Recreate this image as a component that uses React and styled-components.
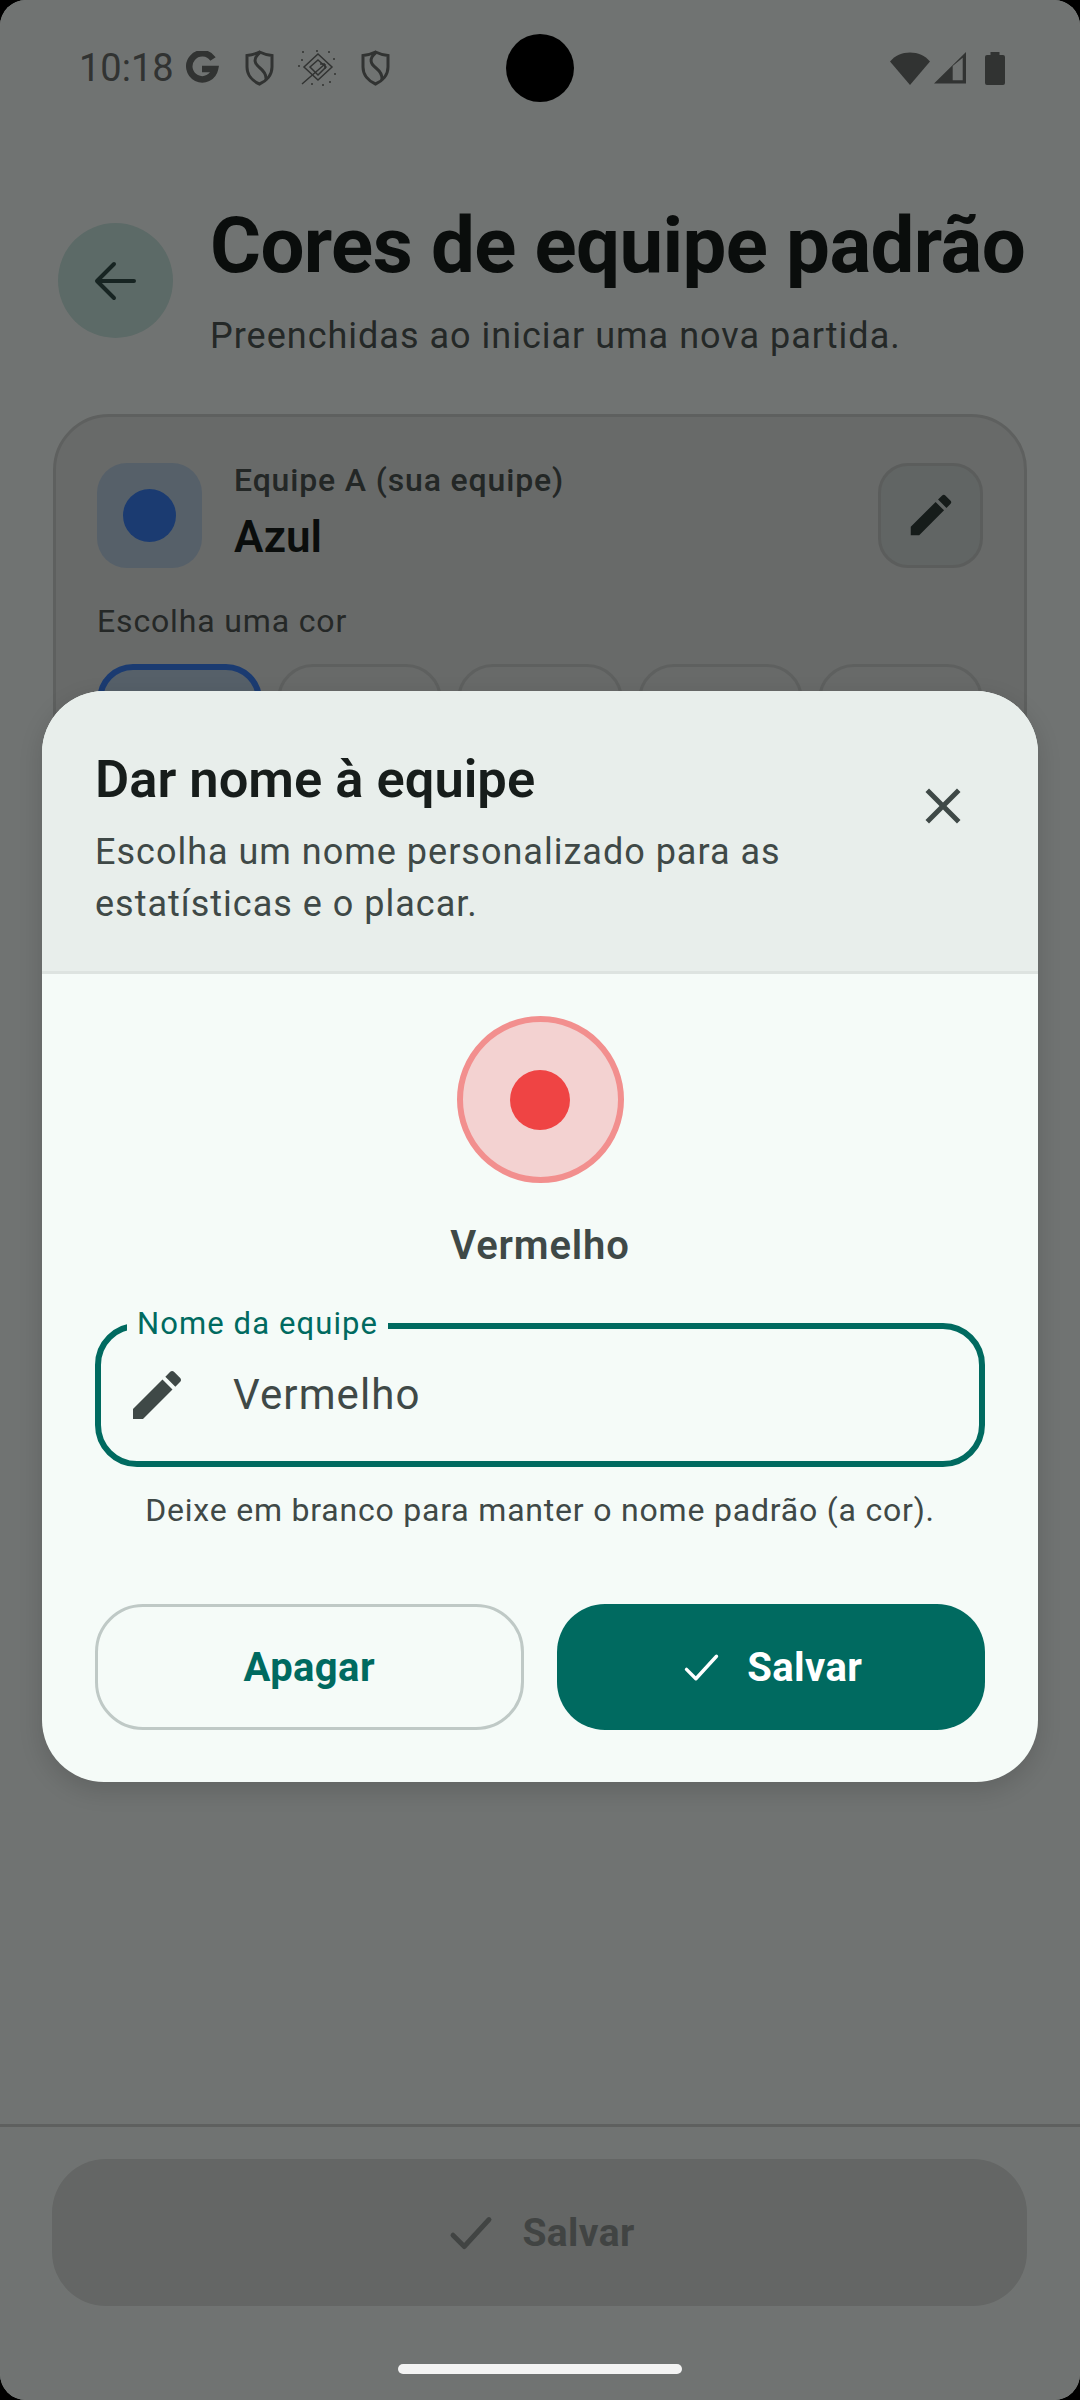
import React from 'react'
import styled, { createGlobalStyle } from 'styled-components'

const EDIT = 'M3 17.25V21h3.75L17.81 9.94l-3.75-3.75L3 17.25zM20.71 7.04c.39-.39.39-1.02 0-1.41l-2.34-2.34c-.39-.39-1.02-.39-1.41 0l-1.83 1.83 3.75 3.75 1.83-1.83z'
const CLOSE = 'M19 6.41 17.59 5 12 10.59 6.41 5 5 6.41 10.59 12 5 17.59 6.41 19 12 13.41 17.59 19 19 17.59 13.41 12z'
const TEAL = '#006a60'
const SURFACE = '#f5fbf8'

const Global = createGlobalStyle`
  html, body { margin: 0; padding: 0; background: #000; }
  * { box-sizing: border-box; }
  body { font-family: Roboto, "Noto Sans", sans-serif; }
`

const Screen = styled.div`
  position: relative;
  width: 1080px;
  height: 2400px;
  overflow: hidden;
  border-radius: 26px;
  background: ${SURFACE};
  display: flex;
  flex-direction: column;
`

const StatusBar = styled.div`
  height: 136px;
  flex-shrink: 0;
  padding: 0 75px;
  display: grid;
  grid-template-columns: 1fr 68px 1fr;
  align-items: center;
  color: #6b6f6d;
`
const StatusLeft = styled.div`
  display: flex;
  align-items: center;
`
const StatusRight = styled.div`
  display: flex;
  align-items: center;
  justify-content: flex-end;
  gap: 4px;
`
const Time = styled.span`
  font-size: 38px;
  line-height: 38px;
  margin: 0 12px 0 4px;
`
const NotifIcons = styled.div`
  display: flex;
  align-items: center;
  gap: 24px;
`
const Camera = styled.div`
  width: 68px;
  height: 68px;
  border-radius: 50%;
  background: #000;
  position: relative;
  z-index: 5;
`
const BatteryIcon = styled.svg`
  margin-left: 15px;
`

const Header = styled.div`
  display: flex;
  align-items: flex-start;
  padding: 66px 40px 0 58px;
  gap: 37px;
`
const BackButton = styled.div`
  width: 115px;
  height: 115px;
  margin-top: 21px;
  flex-shrink: 0;
  border-radius: 50%;
  background: #c8e6e0;
  color: #33504b;
  display: flex;
  align-items: center;
  justify-content: center;
`
const HeaderText = styled.div`
  min-width: 0;
`
const Title = styled.h1`
  margin: 0;
  font-size: 78px;
  line-height: 88px;
  font-weight: 700;
  letter-spacing: -0.6px;
  white-space: nowrap;
  color: #171d1b;
`
const Subtitle = styled.p`
  margin: 22px 0 0;
  font-size: 36px;
  line-height: 48px;
  letter-spacing: 1px;
  color: #4f5755;
`

const Card = styled.section`
  margin: 54px 53px 0;
  height: 1100px;
  flex-shrink: 0;
  padding: 43px 41px;
  border-radius: 56px;
  border: 3px solid #cdd1cf;
  background: #e2e6e4;
`
const TeamRow = styled.div`
  display: flex;
  align-items: center;
  gap: 32px;
`
const SwatchBox = styled.div`
  width: 105px;
  height: 105px;
  border-radius: 30px;
  background: #bbd1e5;
  display: flex;
  align-items: center;
  justify-content: center;
  flex-shrink: 0;
`
const Dot = styled.div`
  width: ${p => p.$size}px;
  height: ${p => p.$size}px;
  border-radius: 50%;
  background: ${p => p.$color};
`
const TeamText = styled.div`
  flex: 1;
  padding-bottom: 8px;
`
const TeamLabel = styled.div`
  font-size: 32px;
  line-height: 40px;
  font-weight: 500;
  letter-spacing: 0.85px;
  color: #4d5553;
`
const TeamName = styled.div`
  margin-top: 12px;
  font-size: 44px;
  line-height: 50px;
  font-weight: 600;
  color: #171d1b;
`
const EditButton = styled.div`
  width: 105px;
  height: 105px;
  border-radius: 30px;
  border: 3px solid #c6cac8;
  background: #d3dcd9;
  color: #303d3a;
  display: flex;
  align-items: center;
  justify-content: center;
  flex-shrink: 0;
`
const PickLabel = styled.div`
  margin-top: 31px;
  font-size: 32px;
  line-height: 40px;
  letter-spacing: 0.85px;
  color: #515856;
`
const ColorGrid = styled.div`
  margin-top: 23px;
  display: grid;
  grid-template-columns: repeat(5, 1fr);
  gap: 15px;
`
const ColorTile = styled.div`
  height: 165px;
  border-radius: 36px;
  border: ${p => (p.$selected ? '6px solid #3b82f6' : '3px solid #cdd1cf')};
  background: ${p => (p.$selected ? '#bbd1e5' : 'transparent')};
`

const BottomBar = styled.div`
  margin-top: auto;
  height: 276px;
  flex-shrink: 0;
  padding: 32px 53px 0 52px;
  border-top: 3px solid #ced2d0;
`
const DisabledSave = styled.div`
  height: 147px;
  border-radius: 54px;
  background: #d9dedc;
  color: #8f9492;
  display: flex;
  align-items: center;
  justify-content: center;
  gap: 24px;
  font-size: 39px;
  font-weight: 700;
  letter-spacing: 0.4px;
`

const Scrim = styled.div`
  position: absolute;
  inset: 0;
  padding: 691px 42px 0;
  background: rgba(0, 0, 0, 0.54);
`
const HomeBar = styled.div`
  position: absolute;
  left: 398px;
  bottom: 26px;
  width: 284px;
  height: 10px;
  border-radius: 5px;
  background: #f3f3f3;
`

const Dialog = styled.div`
  height: 1091px;
  border-radius: 62px;
  overflow: hidden;
  background: ${SURFACE};
  box-shadow: 0 8px 24px rgba(0, 0, 0, 0.14);
  display: flex;
  flex-direction: column;
`
const DialogHead = styled.div`
  height: 283px;
  flex-shrink: 0;
  padding: 56px 53px 0;
  background: #e8eeeb;
  border-bottom: 3px solid #dde3e0;
  display: flex;
  justify-content: space-between;
`
const DialogHeadText = styled.div`
  width: 720px;
`
const DialogTitle = styled.h2`
  margin: 0;
  font-size: 52.5px;
  line-height: 64px;
  font-weight: 600;
  color: #171d1b;
`
const DialogDesc = styled.p`
  margin: 15px 0 0;
  font-size: 36px;
  line-height: 52px;
  letter-spacing: 1px;
  color: #3f4947;
`
const CloseIcon = styled.svg`
  margin: 29px 12px 0 0;
  color: #3f4947;
`
const DialogBody = styled.div`
  flex: 1;
  padding: 42px 53px 52px;
  display: flex;
  flex-direction: column;
  align-items: stretch;
`
const Preview = styled.div`
  align-self: center;
  width: 167px;
  height: 167px;
  border-radius: 50%;
  background: #f3d2d1;
  border: 6px solid #f28f8e;
  display: flex;
  align-items: center;
  justify-content: center;
`
const PreviewName = styled.div`
  margin-top: 40px;
  text-align: center;
  font-size: 40px;
  line-height: 46px;
  font-weight: 600;
  letter-spacing: 0.85px;
  color: #3f4947;
`
const Field = styled.div`
  position: relative;
  margin-top: 54px;
  height: 144px;
  border: 6px solid ${TEAL};
  border-radius: 42px;
  padding: 0 0 0 24px;
  display: flex;
  align-items: center;
  gap: 44px;
`
const FieldLabel = styled.span`
  position: absolute;
  left: 26px;
  top: -28px;
  padding: 0 10px;
  background: ${SURFACE};
  color: ${TEAL};
  font-size: 31px;
  line-height: 46px;
  letter-spacing: 1.1px;
`
const FieldValue = styled.span`
  font-size: 42px;
  line-height: 56px;
  letter-spacing: 1.1px;
  color: #3f4947;
`
const FieldIcon = styled.div`
  color: #3f4947;
  flex-shrink: 0;
  display: flex;
`
const Helper = styled.div`
  margin-top: 21px;
  text-align: center;
  font-size: 32px;
  line-height: 44px;
  letter-spacing: 0.8px;
  color: #3f4947;
`
const Actions = styled.div`
  margin-top: auto;
  display: grid;
  grid-template-columns: 1fr 1fr;
  gap: 33px;
`
const ActionButton = styled.div`
  height: 126px;
  border-radius: 48px;
  border: ${p => (p.$primary ? 'none' : '3px solid #bfc9c6')};
  background: ${p => (p.$primary ? TEAL : 'transparent')};
  color: ${p => (p.$primary ? '#fff' : TEAL)};
  display: flex;
  align-items: center;
  justify-content: center;
  gap: 23px;
  font-size: 40px;
  font-weight: 700;
  letter-spacing: 0.4px;
`

const Edit = ({ size }) => (
  <svg width={size} height={size} viewBox="0 0 24 24" fill="currentColor"><path d={EDIT} /></svg>
)
const Check = ({ size, weight }) => (
  <svg width={size} height={size} viewBox="0 0 24 24" fill="none" stroke="currentColor" strokeWidth={weight} strokeLinecap="round" strokeLinejoin="round">
    <polyline points="4 13 9 18 20 6" />
  </svg>
)
const Shield = () => (
  <svg width="29" height="36" viewBox="0 0 29 36" fill="none" stroke="currentColor" strokeWidth="3">
    <path d="M14.5 2C18.5 4 22.5 5 27 5.5V17C27 25 21.5 31 14.5 34C7.5 31 2 25 2 17V5.5C6.5 5 10.5 4 14.5 2Z" />
    <path d="M15 2.5C7 9 10 14 15 18C20 22 21.5 26 21 30" />
  </svg>
)
const Diamond = () => (
  <svg width="39" height="36" viewBox="0 0 39 36" fill="none" stroke="currentColor" strokeWidth="1.5">
    <path d="M20 4L34 17L20 30L6 17Z" />
    <path d="M20 10L28 17L20 25L12 17Z" />
    <path d="M4 34L27 14M27 14h-5M27 14v5" />
    <g fill="currentColor" stroke="none">
      <circle cx="5" cy="2" r="1" /><circle cx="19" cy="1" r="1" /><circle cx="31" cy="2" r="1" />
      <circle cx="36" cy="9" r="1" /><circle cx="1" cy="16" r="1" /><circle cx="37" cy="24" r="1" />
      <circle cx="32" cy="32" r="1" /><circle cx="14" cy="34" r="1" /><circle cx="25" cy="35" r="1" />
      <circle cx="4" cy="10" r="1" />
    </g>
  </svg>
)

export default function App() {
  return (
    <>
      <Global />
      <Screen>
        <StatusBar>
          <StatusLeft>
            <Time>10:18</Time>
            <NotifIcons>
              <svg width="35" height="34" viewBox="0 0 35 34" fill="none" stroke="currentColor" strokeWidth="6.5">
                <path d="M27 8A13 13 0 1 0 29 18H16" />
              </svg>
              <Shield />
              <Diamond />
              <Shield />
            </NotifIcons>
          </StatusLeft>
          <Camera />
          <StatusRight>
            <svg width="40" height="33" viewBox="0 0 40 33" fill="currentColor">
              <path d="M0 9.5C5 3.5 12 .5 20 .5C28 .5 35 3.5 40 9.5L20 33Z" />
            </svg>
            <svg width="32" height="32" viewBox="0 0 32 32" fill="currentColor" fillRule="evenodd">
              <path d="M0 31.5L32 0V31.5ZM18.7 14L28.7 5.7V28.3H18.7Z" />
            </svg>
            <BatteryIcon width="20" height="33" viewBox="0 0 20 33" fill="currentColor">
              <path d="M5.5 0H14.5V3H18a2 2 0 0 1 2 2V31a2 2 0 0 1-2 2H2a2 2 0 0 1-2-2V5a2 2 0 0 1 2-2H5.5Z" />
            </BatteryIcon>
          </StatusRight>
        </StatusBar>

        <Header>
          <BackButton>
            <svg width="44" height="44" viewBox="0 0 44 44" fill="none" stroke="currentColor" strokeWidth="4" strokeLinecap="round" strokeLinejoin="round">
              <path d="M40 22H4M20 5L3 22L20 39" />
            </svg>
          </BackButton>
          <HeaderText>
            <Title>Cores de equipe padrão</Title>
            <Subtitle>Preenchidas ao iniciar uma nova partida.</Subtitle>
          </HeaderText>
        </Header>

        <Card>
          <TeamRow>
            <SwatchBox><Dot $size={53} $color="#3b82f6" /></SwatchBox>
            <TeamText>
              <TeamLabel>Equipe A (sua equipe)</TeamLabel>
              <TeamName>Azul</TeamName>
            </TeamText>
            <EditButton><Edit size={54} /></EditButton>
          </TeamRow>
          <PickLabel>Escolha uma cor</PickLabel>
          <ColorGrid>
            <ColorTile $selected />
            <ColorTile />
            <ColorTile />
            <ColorTile />
            <ColorTile />
          </ColorGrid>
        </Card>

        <BottomBar>
          <DisabledSave>
            <Check size={54} weight={2.2} />
            <span>Salvar</span>
          </DisabledSave>
        </BottomBar>

        <Scrim>
          <Dialog>
            <DialogHead>
              <DialogHeadText>
                <DialogTitle>Dar nome à equipe</DialogTitle>
                <DialogDesc>Escolha um nome personalizado para as estatísticas e o placar.</DialogDesc>
              </DialogHeadText>
              <CloseIcon width="60" height="60" viewBox="0 0 24 24" fill="currentColor"><path d={CLOSE} /></CloseIcon>
            </DialogHead>
            <DialogBody>
              <Preview><Dot $size={60} $color="#ef4444" /></Preview>
              <PreviewName>Vermelho</PreviewName>
              <Field>
                <FieldLabel>Nome da equipe</FieldLabel>
                <FieldIcon><Edit size={64} /></FieldIcon>
                <FieldValue>Vermelho</FieldValue>
              </Field>
              <Helper>Deixe em branco para manter o nome padrão (a cor).</Helper>
              <Actions>
                <ActionButton>Apagar</ActionButton>
                <ActionButton $primary>
                  <Check size={45} weight={1.8} />
                  <span>Salvar</span>
                </ActionButton>
              </Actions>
            </DialogBody>
          </Dialog>
        </Scrim>
        <HomeBar />
      </Screen>
    </>
  )
}
